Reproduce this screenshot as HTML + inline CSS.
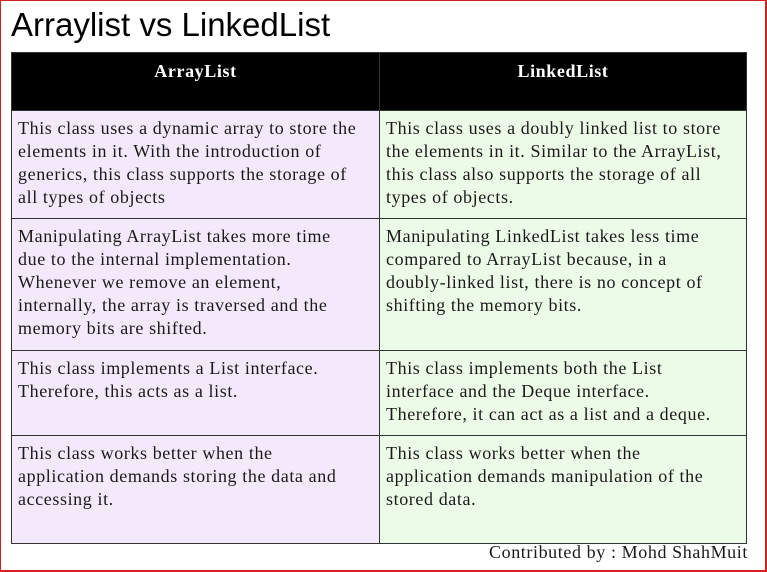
<!DOCTYPE html>
<html><head><style>
body{margin:0;width:767px;height:572px;overflow:hidden;background:#fff;}
.frame{position:absolute;left:0;top:0;width:764px;height:569px;border:1px solid #d42020;border-right-width:2px;border-bottom-width:2px;}
h1{position:absolute;left:11px;top:6px;margin:0;font:400 33px "Liberation Sans",sans-serif;color:#000;}
.t{position:absolute;left:11px;top:52px;width:736px;}
.c{position:absolute;box-sizing:border-box;border:1px solid #333;padding:6px 6px;font:18px/23px "Liberation Serif",serif;letter-spacing:0.6px;white-space:nowrap;color:#1a1a1a;}
.l{left:0;width:369px;background:#f4e8fb;}
.r{left:368px;width:368px;background:#ecfbe8;}
.h{background:#000;color:#fff;font-weight:bold;text-align:center;padding-top:7px;}
.cb{position:absolute;right:19px;top:542px;font:18px "Liberation Serif",serif;letter-spacing:0.6px;color:#1a1a1a;}
</style></head><body>
<div class="frame"></div>
<h1>Arraylist vs LinkedList</h1>
<div class="t">
<div class="c l h" style="top:0;height:59px">ArrayList</div>
<div class="c r h" style="top:0;height:59px">LinkedList</div>
<div class="c l" style="top:58px;height:109px">This class uses a dynamic array to store the<br>elements in it. With the introduction of<br>generics, this class supports the storage of<br>all types of objects</div>
<div class="c r" style="top:58px;height:109px">This class uses a doubly linked list to store<br>the elements in it. Similar to the ArrayList,<br>this class also supports the storage of all<br>types of objects.</div>
<div class="c l" style="top:166px;height:133px">Manipulating ArrayList takes more time<br>due to the internal implementation.<br>Whenever we remove an element,<br>internally, the array is traversed and the<br>memory bits are shifted.</div>
<div class="c r" style="top:166px;height:133px">Manipulating LinkedList takes less time<br>compared to ArrayList because, in a<br>doubly-linked list, there is no concept of<br>shifting the memory bits.</div>
<div class="c l" style="top:298px;height:86px">This class implements a List interface.<br>Therefore, this acts as a list.</div>
<div class="c r" style="top:298px;height:86px">This class implements both the List<br>interface and the Deque interface.<br>Therefore, it can act as a list and a deque.</div>
<div class="c l" style="top:383px;height:109px">This class works better when the<br>application demands storing the data and<br>accessing it.</div>
<div class="c r" style="top:383px;height:109px">This class works better when the<br>application demands manipulation of the<br>stored data.</div>
</div>
<div class="cb">Contributed by : Mohd ShahMuit</div>
</body></html>
